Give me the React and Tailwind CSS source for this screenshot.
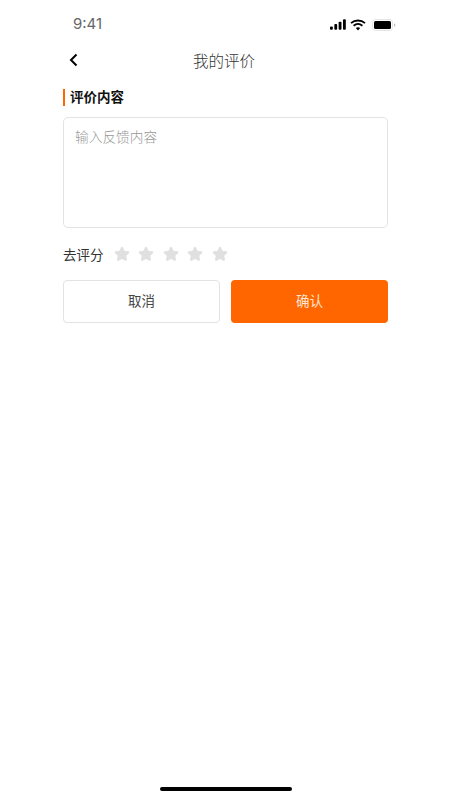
import React from 'react';

const font = { fontFamily: '"Noto Sans CJK SC", sans-serif' };

function Star() {
    return (
        <svg width="16" height="16" viewBox="0 0 24 24" fill="#e0e0e0" stroke="#e0e0e0" strokeWidth="3.5" strokeLinejoin="round">
            <path d="M12 3l2.8 5.9 6.4.8-4.7 4.4 1.2 6.4L12 17.4l-5.7 3.1 1.2-6.4-4.7-4.4 6.4-.8z" />
        </svg>
    );
}

function StatusBar() {
    return (
        <div className="h-[48px] flex items-center justify-between pl-[73px] pr-[54px] pt-[1px]">
            <span className="text-[15px] text-[#666] font-['Inter',sans-serif]">9:41</span>
            <div className="flex items-center gap-[4px]">
                <svg width="16" height="11" viewBox="0 0 17 11" fill="#000">
                    <rect x="0" y="7.5" width="3" height="3.5" rx="1" />
                    <rect x="4.6" y="5" width="3" height="6" rx="1" />
                    <rect x="9.2" y="2.5" width="3" height="8.5" rx="1" />
                    <rect x="13.8" y="0" width="3" height="11" rx="1" />
                </svg>
                <svg width="16" height="12" viewBox="0 0 16 12" fill="none" stroke="#000" strokeWidth="1.8">
                    <path d="M1 4.2C5 .6 11 .6 15 4.2" />
                    <path d="M3.6 6.8c2.6-2.2 6.2-2.2 8.8 0" />
                    <path d="M8 11.5L5.8 9c1.3-1 3.1-1 4.4 0z" fill="#000" stroke="none" />
                </svg>
                <svg className="ml-[2px]" width="24" height="12" viewBox="0 0 24 12" fill="none">
                    <rect x="0.5" y="0.5" width="20" height="11" rx="3" stroke="#e4e4e4" />
                    <rect x="2" y="2" width="17" height="8" rx="1.5" fill="#000" />
                    <rect x="22" y="4.5" width="1.2" height="3" rx="0.6" fill="#bbb" />
                </svg>
            </div>
        </div>
    );
}

export default function App() {
    return (
        <div className="w-[450px] h-[800px] bg-white flex flex-col relative overflow-hidden" style={font}>
            <StatusBar />

            {/* header */}
            <div className="h-[26px] flex items-center relative justify-center pr-[2px]">
                <svg className="absolute left-[68px] top-[5px]" width="11" height="14" viewBox="0 0 11 14" fill="none" stroke="#000" strokeWidth="2">
                    <path d="M8.5 1.5L3 7l5.5 5.5" />
                </svg>
                <span className="text-[15.5px] leading-[24px] text-[#333] font-light mt-[-2px]">我的评价</span>
            </div>

            <div className="pl-[63px] pr-[62px] pt-[15px] flex flex-col">
                <div className="border-l-[2px] border-[#ff6600] pl-[5px] h-[17px] flex items-center text-[13.5px] leading-[17px] font-bold text-[#111]"><span className="mt-[-2px]">评价内容</span></div>

                <div className="mt-[11px] h-[111px] border border-[#e3e3e0] rounded-[5px] px-[11px] py-[9px] text-[13.7px] leading-[20px] font-light text-[#999]"><span className="relative top-[-1px]">输入反馈内容</span></div>

                <div className="mt-[15px] h-[22px] flex items-center">
                    <span className="text-[13.5px] text-[#333] mr-[10px]">去评分</span>
                    <div className="flex gap-[8.6px]">
                        <Star /><Star /><Star /><Star /><Star />
                    </div>
                </div>

                <div className="mt-[15px] grid grid-cols-[157px_157px] gap-[11px]">
                    <div className="h-[43px] border border-[#e3e3e0] rounded-[4px] flex items-center justify-center text-[13.5px] text-[#444]"><span className="relative top-[-1px]">取消</span></div>
                    <div className="h-[43px] bg-[#ff6600] rounded-[4px] flex items-center justify-center text-[13.5px] text-[#ffe6d5]"><span className="relative top-[-1px]">确认</span></div>
                </div>
            </div>

            <div className="absolute left-[160px] bottom-[9px] w-[132px] h-[4px] rounded-full bg-black"></div>
        </div>
    );
}
